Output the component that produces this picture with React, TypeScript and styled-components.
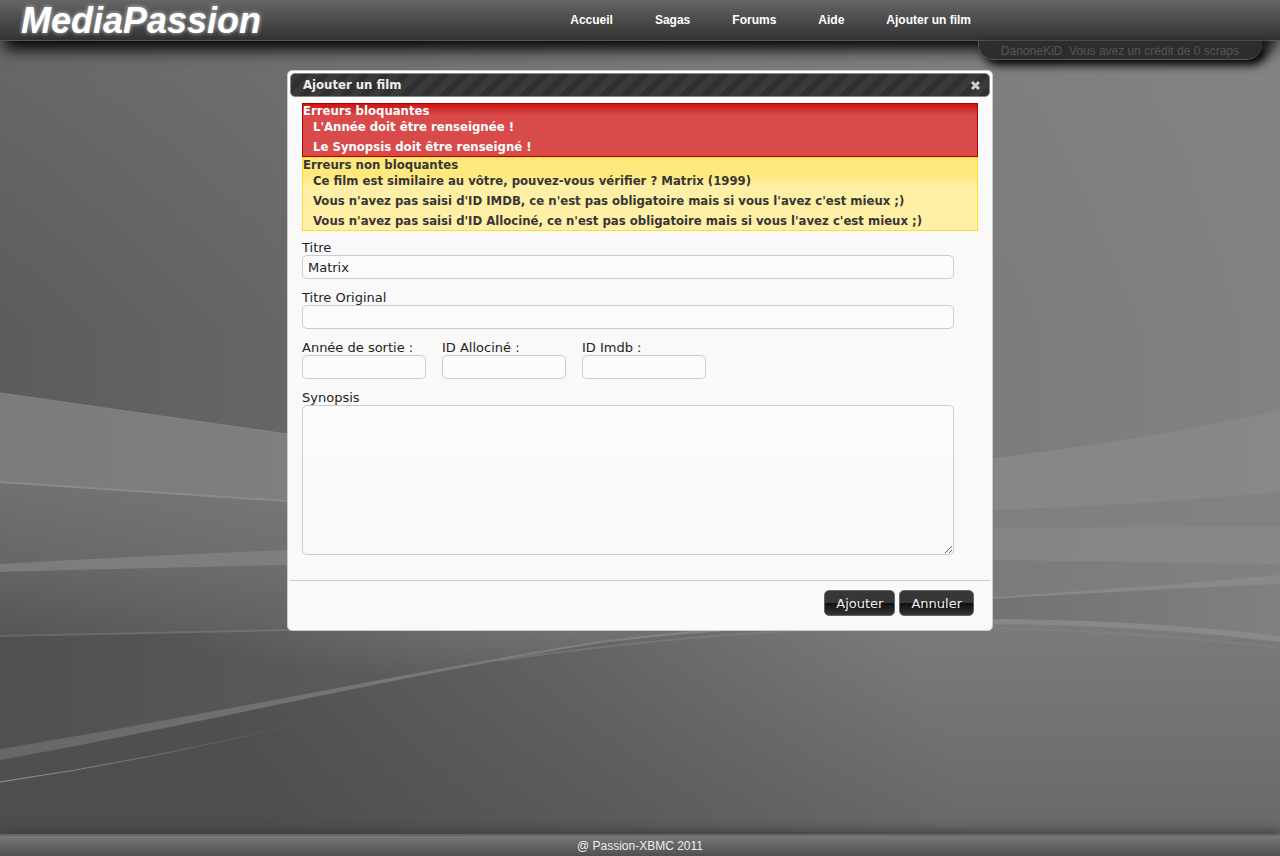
import React from "react";
import styled, { createGlobalStyle, css } from "styled-components";

const GlobalStyle = createGlobalStyle`
  *, *::before, *::after { box-sizing: border-box; }
  body {
    margin: 0;
    background: #666;
    font-family: Verdana, "DejaVu Sans", sans-serif;
    font-size: 13px;
    color: #222;
  }
`;

const arial = css`
  font-family: "Liberation Sans", Arial, sans-serif;
`;

const strong = css`
  font-family: "DejaVu Sans Condensed", Tahoma, sans-serif;
  font-size: 13px;
  font-weight: bold;
`;

const Page = styled.div`
  position: relative;
  isolation: isolate;
  min-height: 100vh;
  display: flex;
  flex-direction: column;
  overflow: hidden;
`;

const Backdrop = styled.svg`
  position: absolute;
  inset: 0;
  z-index: -1;
  width: 100%;
  height: 100%;
`;

const Header = styled.header`
  ${arial}
  display: grid;
  grid-template-columns: minmax(0, 1fr) 706px minmax(0, 1fr);
  align-items: start;
  height: 41px;
  background: linear-gradient(#656565, #323232);
  border-bottom: 1px solid #555;
  box-shadow: 0 12px 16px -4px #000;
`;

const Logo = styled.a`
  padding-left: 21px;
  font-size: 36px;
  line-height: 42px;
  font-weight: bold;
  font-style: italic;
  color: #fff;
  text-decoration: none;
  text-shadow: 0 0 4px #ccc;
`;

const Nav = styled.nav`
  display: flex;
  justify-content: flex-end;
  gap: 42px;
  padding-right: 22px;
`;

const NavLink = styled.a`
  font-size: 12px;
  line-height: 40px;
  font-weight: bold;
  color: #fff;
  text-decoration: none;
`;

const UserBar = styled.div`
  display: flex;
  justify-content: flex-end;
  padding-right: 18px;
`;

const UserTab = styled.div`
  ${arial}
  height: 19px;
  padding: 0 23px 0 22px;
  font-size: 12px;
  line-height: 20px;
  white-space: pre;
  color: #555;
  background: #2d2d2d;
  border: solid #555;
  border-width: 0 0 1px 1px;
  border-radius: 0 0 15px 15px;
  box-shadow: 5px 5px 10px #000;
`;

const Main = styled.main`
  flex: 1;
  padding: 10px 0 20px;
`;

const Dialog = styled.section`
  width: 706px;
  max-width: 100%;
  margin: 0 auto;
  padding: 2px;
  background: linear-gradient(#fff, #fcfcfc 40px, #f9f9f9 60px);
  border: 1px solid #ccc;
  border-radius: 5px;
`;

const TitleBar = styled.div`
  display: flex;
  align-items: center;
  justify-content: space-between;
  height: 24px;
  padding: 0 8px 0 12px;
  background: #333 linear-gradient(-45deg, #303030 25%, #3a3a3a 25% 50%, #303030 50% 75%, #3a3a3a 75%) 0 0 / 20px 20px;
  border: 1px solid #888;
  border-radius: 5px;
`;

const Title = styled.h1`
  ${strong}
  margin: 0;
  line-height: 24px;
  color: #eee;
`;

const CloseButton = styled.button`
  display: flex;
  padding: 0;
  border: 0;
  background: none;
  color: #ccc;
`;

const Form = styled.form`
  display: block;
`;

const Content = styled.div`
  display: flex;
  flex-direction: column;
  gap: 10px;
  padding: 6px 12px 25px;
`;

const Messages = styled.div`
  margin-bottom: -2px;
`;

const Message = styled.div<{ $kind: "error" | "warning" }>`
  ${strong}
  ${(p) =>
    p.$kind === "error"
      ? css`
          color: #fff;
          border: 1px solid #a00;
          background: linear-gradient(#cd1515, #d94b4b 12px);
        `
      : css`
          color: #363636;
          border: 1px solid #fedd2e;
          background: linear-gradient(#ffe97d 18px, #fff0a5 28px);
        `}
`;

const MessageTitle = styled.h2`
  margin: 0;
  height: 12px;
  font-size: 13px;
  line-height: 14px;
`;

const MessageList = styled.ul`
  margin: 0;
  padding: 0 0 0 10px;
  list-style: none;
`;

const MessageItem = styled.li`
  height: 20px;
  line-height: 22px;
`;

const FieldRow = styled.div`
  display: flex;
  flex-wrap: wrap;
  gap: 16px;
`;

const Field = styled.div<{ $short?: boolean }>`
  display: flex;
  flex-direction: column;
  width: ${(p) => (p.$short ? "124px" : "calc(100% - 24px)")};
`;

const Label = styled.label`
  height: 16px;
  line-height: 18px;
`;

const control = css`
  display: block;
  width: 100%;
  margin: 0;
  padding: 0 5px;
  font: inherit;
  color: #222;
  border: 1px solid #ccc;
  border-radius: 5px;
  outline: 0;
`;

const Input = styled.input`
  ${control}
  height: 24px;
  background: #fcfcfc;
`;

const TextArea = styled.textarea`
  ${control}
  height: 150px;
  resize: both;
  background: linear-gradient(#fcfcfc 46px, #f9f9f9 54px);
`;

const ButtonPane = styled.div`
  display: flex;
  justify-content: flex-end;
  gap: 4px;
  padding: 9px 16px 12px;
  border-top: 1px solid #ccc;
`;

const Button = styled.button`
  height: 26px;
  padding: 0 11px;
  font: inherit;
  color: #eee;
  background: linear-gradient(#373737 50%, #0e0e0e 50%, #363636);
  border: 1px solid #666;
  border-radius: 5px;
`;

const Footer = styled.footer`
  ${arial}
  height: 22px;
  font-size: 12px;
  line-height: 20px;
  text-align: center;
  color: #eee;
  background: linear-gradient(#787878, #505050);
  border-top: 2px solid #666;
  box-shadow: 0 -2px 12px #3a3a3a;
`;

const navItems = ["Accueil", "Sagas", "Forums", "Aide", "Ajouter un film"];

const errors = ["L'Année doit être renseignée !", "Le Synopsis doit être renseigné !"];

const warnings = [
  "Ce film est similaire au vôtre, pouvez-vous vérifier ? Matrix (1999)",
  "Vous n'avez pas saisi d'ID IMDB, ce n'est pas obligatoire mais si vous l'avez c'est mieux ;)",
  "Vous n'avez pas saisi d'ID Allociné, ce n'est pas obligatoire mais si vous l'avez c'est mieux ;)",
];

const ramps: Record<string, [string, string, string]> = {
  sky: ["#5c5c5c", "#757575", "#828282"],
  ribbon: ["#7b7b7b", "#858585", "#888888"],
  middle: ["#666666", "#7c7c7c", "#828282"],
  streak: ["#7c7c7c", "#838383", "#878787"],
  valley: ["#555555", "#757575", "#818181"],
  hill: ["#505050", "#646464", "#808080"],
  edge: ["#666666", "#848484", "#8a8a8a"],
};

function Waves() {
  return (
    <Backdrop viewBox="0 0 1280 856" preserveAspectRatio="none" aria-hidden="true">
      <defs>
        {Object.entries(ramps).map(([name, stops]) => (
          <linearGradient key={name} id={name} gradientUnits="userSpaceOnUse" x1="0" y1="0" x2="1280" y2="0">
            <stop offset="0" stopColor={stops[0]} />
            <stop offset=".55" stopColor={stops[1]} />
            <stop offset="1" stopColor={stops[2]} />
          </linearGradient>
        ))}
        <linearGradient id="ground" gradientUnits="userSpaceOnUse" x1="260" y1="800" x2="900" y2="600">
          <stop offset="0" stopColor="#515151" />
          <stop offset=".5" stopColor="#646464" />
          <stop offset="1" stopColor="#7b7b7b" />
        </linearGradient>
        <linearGradient id="topLight" x1="0" y1="0" x2="0" y2="1">
          <stop offset="0" stopColor="#888" stopOpacity=".3" />
          <stop offset="1" stopColor="#888" stopOpacity="0" />
        </linearGradient>
        <linearGradient id="shade" x1="0" y1="0" x2="0" y2="1">
          <stop offset="0" stopColor="#484848" stopOpacity="0" />
          <stop offset="1" stopColor="#484848" stopOpacity=".4" />
        </linearGradient>
        <linearGradient id="lift" x1="0" y1="0" x2="0" y2="1">
          <stop offset="0" stopColor="#8a8a8a" stopOpacity=".3" />
          <stop offset="1" stopColor="#8a8a8a" stopOpacity="0" />
        </linearGradient>
        <radialGradient id="glow">
          <stop offset="0" stopColor="#8a8a8a" stopOpacity=".5" />
          <stop offset="1" stopColor="#8a8a8a" stopOpacity="0" />
        </radialGradient>
        <linearGradient id="fade" gradientUnits="userSpaceOnUse" x1="0" y1="0" x2="310" y2="0">
          <stop offset="0" stopColor="#999" />
          <stop offset="1" stopColor="#888" stopOpacity="0" />
        </linearGradient>
        <clipPath id="hillside">
          <path d="M0 637 L287 631 Q640 625 993 612 V856 H0Z" />
        </clipPath>
      </defs>
      <rect width="1280" height="856" fill="url(#sky)" />
      <rect width="1280" height="330" fill="url(#topLight)" />
      <path d="M0 393 L287 434 Q700 500 993 458 Q1140 441 1280 410 V856 H0Z" fill="url(#ribbon)" />
      <path d="M0 393 L287 434" fill="none" stroke="#858585" />
      <path d="M0 483 L287 502 Q700 525 993 510 Q1140 505 1280 492 V856 H0Z" fill="url(#middle)" />
      <path d="M0 482 L287 501" fill="none" stroke="#8a8a8a" strokeWidth="2" />
      <path d="M0 483 L287 502 V552 L0 565Z" fill="url(#lift)" />
      <path d="M0 564 Q140 556 287 550 Q640 530 993 528 L1280 526 V856 H0Z" fill="url(#streak)" />
      <path d="M0 572 Q140 568 287 565 Q640 556 993 560 L1280 564 V856 H0Z" fill="url(#valley)" />
      <path d="M0 572 Q140 568 287 565 V630 L0 636Z" fill="url(#lift)" />
      <path d="M993 553 L1280 558" fill="none" stroke="#868686" strokeWidth="3" />
      <path d="M0 635 L287 629 Q640 621 993 597 Q1140 588 1280 575 V856 H0Z" fill="url(#edge)" />
      <path d="M0 637 L287 631 Q640 625 993 599 Q1140 590 1280 584 V856 H0Z" fill="url(#hill)" />
      <ellipse cx="560" cy="620" rx="420" ry="62" fill="url(#glow)" clipPath="url(#hillside)" />
      <path d="M0 749 C200 717 400 673 600 641 Q780 618 993 619 Q1150 620 1280 636 V856 H0Z" fill="url(#edge)" />
      <path d="M0 760 C200 724 400 675 600 643 Q780 621 993 624 Q1150 626 1280 642 V856 H0Z" fill="url(#ground)" />
      <path d="M500 660 Q780 621 993 628 Q1150 632 1280 648" fill="none" stroke="#858585" strokeWidth="2" opacity=".5" />
      <path d="M0 760 C200 724 400 675 600 643 Q780 621 993 624 Q1150 626 1280 642 V856 H0Z" fill="url(#shade)" />
      <path d="M0 782 Q150 760 310 721" fill="none" stroke="url(#fade)" strokeWidth="1" />
    </Backdrop>
  );
}

function CloseIcon() {
  return (
    <svg width="11" height="11" viewBox="0 0 11 11" aria-hidden="true">
      <path d="M2 2 L9 9 M9 2 L2 9" stroke="currentColor" strokeWidth="3" />
    </svg>
  );
}

export default function App() {
  return (
    <Page>
      <GlobalStyle />
      <Waves />
      <Header>
        <Logo href="#">MediaPassion</Logo>
        <Nav>
          {navItems.map((item) => (
            <NavLink key={item} href="#">
              {item}
            </NavLink>
          ))}
        </Nav>
      </Header>
      <UserBar>
        <UserTab>{"DanoneKiD  Vous avez un crédit de 0 scraps"}</UserTab>
      </UserBar>
      <Main>
        <Dialog role="dialog" aria-labelledby="dialog-title">
          <TitleBar>
            <Title id="dialog-title">Ajouter un film</Title>
            <CloseButton type="button" aria-label="Fermer">
              <CloseIcon />
            </CloseButton>
          </TitleBar>
          <Form onSubmit={(e) => e.preventDefault()}>
            <Content>
              <Messages>
                <Message $kind="error">
                  <MessageTitle>Erreurs bloquantes</MessageTitle>
                  <MessageList>
                    {errors.map((text) => (
                      <MessageItem key={text}>{text}</MessageItem>
                    ))}
                  </MessageList>
                </Message>
                <Message $kind="warning">
                  <MessageTitle>Erreurs non bloquantes</MessageTitle>
                  <MessageList>
                    {warnings.map((text) => (
                      <MessageItem key={text}>{text}</MessageItem>
                    ))}
                  </MessageList>
                </Message>
              </Messages>
              <Field>
                <Label htmlFor="titre">Titre</Label>
                <Input id="titre" defaultValue="Matrix" />
              </Field>
              <Field>
                <Label htmlFor="original">Titre Original</Label>
                <Input id="original" />
              </Field>
              <FieldRow>
                <Field $short>
                  <Label htmlFor="annee">Année de sortie :</Label>
                  <Input id="annee" />
                </Field>
                <Field $short>
                  <Label htmlFor="allocine">ID Allociné :</Label>
                  <Input id="allocine" />
                </Field>
                <Field $short>
                  <Label htmlFor="imdb">ID Imdb :</Label>
                  <Input id="imdb" />
                </Field>
              </FieldRow>
              <Field>
                <Label htmlFor="synopsis">Synopsis</Label>
                <TextArea id="synopsis" />
              </Field>
            </Content>
            <ButtonPane>
              <Button type="submit">Ajouter</Button>
              <Button type="button">Annuler</Button>
            </ButtonPane>
          </Form>
        </Dialog>
      </Main>
      <Footer>@ Passion-XBMC 2011</Footer>
    </Page>
  );
}
